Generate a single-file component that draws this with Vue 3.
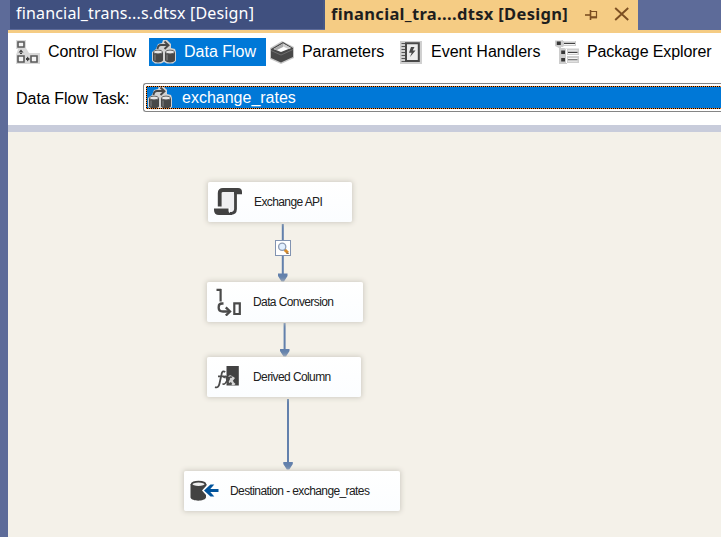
<script setup>
const nodes = [
  { id: 'script', label: 'Exchange API' },
  { id: 'convert', label: 'Data Conversion' },
  { id: 'derive', label: 'Derived Column' },
  { id: 'dest', label: 'Destination - exchange_rates' },
]
</script>

<template>
  <div class="window">
    <svg class="defs" width="0" height="0">
      <symbol id="flow-icon" viewBox="0 0 24 24">
        <path d="M0 12 L4 9 L6 4 L10 3 L11 0 H15 L19 4 V8 L23 9 L24 12 V21 L21 23.5 H15 L12 22 L9 23.5 H3 L0 21 Z" fill="#d2d2d2" />
        <path d="M5.5 9 Q6 5 9 5 H16 M12.5 1.5 L16.5 5.2 L12.5 9" fill="none" stroke="#484848" stroke-width="1.9" />
        <path d="M1 12 V20.5 C2.5 23 9.5 23 11 20.5 V12 Z M13 12 V20.5 C14.5 23 21.5 23 23 20.5 V12 Z" fill="#484848" />
        <path d="M3 14.5 V20.5 M15 14.5 V20.5" stroke="#858585" />
        <ellipse cx="6" cy="12" rx="4.5" ry="1.9" fill="#e6e6e6" stroke="#555" stroke-width=".9" />
        <ellipse cx="18" cy="12" rx="4.5" ry="1.9" fill="#e6e6e6" stroke="#555" stroke-width=".9" />
      </symbol>
    </svg>

    <header class="tabs">
      <div class="tab idle"><span class="idle-text">financial_trans...s.dtsx [Design]</span></div>
      <div class="tab current">
        <span class="current-text">financial_tra....dtsx [Design]</span>
        <svg class="pin" width="14" height="12" viewBox="0 0 14 12" fill="none" stroke="#7c4f22">
          <path d="M0 6 H5" stroke-width="1.6" /><path d="M5.5 1 V11" stroke-width="1.6" /><path d="M5.5 2.5 H11.5 V9" stroke-width="1.2" /><path d="M5.5 8.3 H12" stroke-width="2.2" />
        </svg>
        <svg class="close" width="16" height="14" viewBox="0 0 16 14" fill="none" stroke="#7c4f22" stroke-width="1.9">
          <path d="M1.2 1 L14.2 13 M14.2 1 L1.2 13" />
        </svg>
      </div>
    </header>

    <main class="pane">
      <nav class="views">
        <div class="view control">
          <svg width="24" height="24" viewBox="0 0 24 24">
            <path d="M0 0 H10 V8 L13 13 H24 V24 H0 V15 L2 9 H0 Z" fill="#d9d9d9" />
            <g fill="#f4f4f4" stroke="#5a5a5a" stroke-width="1.6"><path d="M2 2 H8 V7 H2 Z M2 16 H8 V22 H2 Z M15 16 H21 V22 H15 Z" /></g>
            <path d="M5 9.5 L2.5 12.5 H7.5 Z M4 12 H6 V14 H4 Z M10 18 H13 V20 H10 Z M11 16.5 L14 19 L11 21.5 Z" fill="#424242" />
          </svg>
          <span>Control Flow</span>
        </div>
        <div class="view data selected">
          <svg width="24" height="24"><use href="#flow-icon" /></svg>
          <span>Data Flow</span>
        </div>
        <div class="view params">
          <svg width="24" height="24" viewBox="0 0 24 24">
            <path d="M0 8 L12 1 L24 7 V18 L11 24 L0 19 Z" fill="#c8c8c8" />
            <path d="M1 9 L13 2 L23 8 V17 L11 22.5 L1 18 Z" fill="#484848" />
            <path d="M3.5 9 L13 3.5 L21 8 L11 12 Z" fill="#fff" /><path d="M3.5 9 L13 3.5 V7 L6.5 10.2 Z" fill="#aaa" /><path d="M13 3.5 L21 8 L18.5 9 L13 6.5 Z" fill="#ccc" />
            <path d="M1 10.5 L11 15 L23 9.5" fill="none" stroke="#777" stroke-width=".8" />
          </svg>
          <span>Parameters</span>
        </div>
        <div class="view events">
          <svg width="22" height="23" viewBox="0 0 22 23">
            <path d="M0 0 H22 V23 H0 Z" fill="#d0d0d0" />
            <path d="M6 2.2 H18.8 V20 H6 Z" fill="#ededed" stroke="#484848" stroke-width="2" />
            <path d="M1.5 2.5 H5 M1.5 5.5 H5 M1.5 8.5 H5 M1.5 11.5 H5 M1.5 14.5 H5 M1.5 17.5 H5 M1.5 20.5 H5" stroke="#555" stroke-width="1.2" />
            <path d="M11 6 L9 11.8 H11.7 L10 16 L15.5 9.6 H12.7 L14.5 6 Z" fill="#484848" />
          </svg>
          <span>Event Handlers</span>
        </div>
        <div class="view explorer">
          <svg width="24" height="24" viewBox="0 0 24 24">
            <path d="M0 .5 H6 L8 0 V1 H21 V6 H8 L10 8.5 H24 V15 H12 V16 H24 V23 H12 V24 H4 V8 L0 6 Z" fill="#cdcdcd" />
            <path d="M11.5 9 V23 M6 7.5 H21" stroke="#fff" />
            <path d="M1.8 1.5 H5.8 V5 H1.8 Z M6.2 10.5 H10 V14 H6.2 Z M6.2 18 H10 V21.5 H6.2 Z" fill="#383838" />
            <path d="M9 3.3 H20 M13 12.3 H22.5 M13 19.7 H22.5" stroke="#f5f5f5" stroke-width="3.4" />
            <path d="M9 3.3 H20 M13 12.3 H22.5" stroke="#424242" stroke-width="1.3" />
            <path d="M13 19.7 H22.5" stroke="#777" stroke-width="1.3" />
          </svg>
          <span>Package Explorer</span>
        </div>
      </nav>

      <div class="task">
        <span class="task-label">Data Flow Task:</span>
        <div class="combo">
          <div class="combo-value">
            <svg class="combo-icon" width="24" height="24"><use href="#flow-icon" /></svg>
            <span>exchange_rates</span>
            <div class="focus"></div>
          </div>
        </div>
      </div>

      <section class="canvas">
        <svg class="links" width="713" height="405" viewBox="8 132 713 405">
          <g stroke="#6280ac" stroke-width="2"><path d="M282.8 224 V275 M284.6 323 V351 M288 399 V464" /></g>
          <path d="M278 273.5 H287.5 V276 L284 281.5 H281.5 L278 276 Z M280 349 H289.5 V351 L286 356.5 H283.5 L280 351 Z M283.3 462 H292.8 V464 L289.3 469.5 H286.8 L283.3 464 Z" fill="#6280ac" />
        </svg>
        <div class="viewer">
          <svg width="14" height="14" viewBox="0 0 14 14">
            <path d="M8.5 8.5 L11.8 11.8" stroke="#d78b2a" stroke-width="3" /><path d="M10.5 12.3 L12.8 12.3" stroke="#765334" />
            <circle cx="6.2" cy="5.8" r="3.6" fill="#e1efff" stroke="#8f9db5" stroke-width="1.3" />
          </svg>
        </div>

        <div v-for="n in nodes" :key="n.id" class="node" :class="n.id">
          <svg v-if="n.id === 'script'" class="glyph" width="30" height="30" viewBox="0 0 30 30">
            <path d="M8 3 H24 L21 8 V25 L17 27 V21 H7 V7 Z" fill="#efeff1" />
            <path d="M6.7 19.5 V6 Q6.7 3 10 3 H24" fill="none" stroke="#424242" stroke-width="3.8" />
            <path d="M22.5 5 V22 Q22.5 26.5 17 26.5" fill="none" stroke="#424242" stroke-width="2.8" />
            <path d="M21 1.1 H25 Q29 1.1 29 5 V7.3 H21 Z M1 21.5 H15.5 V24 Q15.5 26 17.5 26 L19 25.5 V28 H6 Q1 28 1 23 Z" fill="#424242" />
          </svg>
          <svg v-else-if="n.id === 'convert'" class="glyph" width="26" height="28" viewBox="0 0 26 28" fill="none" stroke="#4a4a4a">
            <path d="M.5 1.8 H5.2 M4.6 1 V13.5" stroke-width="2.2" />
            <path d="M7.5 15.5 H6 Q2.7 15.5 2.7 19 V20 Q2.7 23.5 7 23.5 H13" stroke-width="2.3" />
            <path d="M9.8 19.3 L14 23.5 L9.8 27.5" stroke-width="2.4" />
            <path d="M18.3 15.3 H23.8 V26 H18.3 Z" stroke-width="2.2" />
          </svg>
          <svg v-else-if="n.id === 'derive'" class="glyph" width="27" height="25" viewBox="0 0 27 25">
            <path d="M13.5 1 H25.8 V20.5 H13.5 Z" fill="#424242" />
            <path d="M16.3 12.4 Q18 10.8 18.2 14 L18.9 17 Q19.5 20 21.5 18 M20.8 12.2 L15.5 19" fill="none" stroke="#d5d5d5" stroke-width="3" />
            <path d="M12.2 7 Q9.3 4.8 8.5 9.5 L6.5 18.5 Q5.5 23.5 2 22.2 M5 11.4 H11.5" fill="none" stroke="#4a4a4a" stroke-width="1.8" />
            <path d="M10.5 12.7 Q13 10 13.8 13.5 L14.7 17 Q15.4 20.6 18.5 17.8" fill="none" stroke="#4a4a4a" stroke-width="2.1" />
            <path d="M19 12.4 Q17.5 11 15.8 13.4 L12.8 17.5 Q11.4 20 9.5 18.7" fill="none" stroke="#4a4a4a" stroke-width="1.5" />
          </svg>
          <svg v-else class="glyph" width="30" height="22" viewBox="0 0 30 22">
            <path d="M0.5 4 V17.5 C2 21.7 14.5 21.7 16 17.5 V15 L12 10.5 L16.5 5.5 V4 Z" fill="#424242" />
            <ellipse cx="8.5" cy="4.3" rx="6.9" ry="2.7" fill="#eee" stroke="#424242" stroke-width="1.8" />
            <path d="M14 10.5 L20.5 4.5 H24.3 L20.3 9.1 H28.5 V12 H20.3 L24.3 16.6 H20.5 Z" fill="#00539c" />
          </svg>
          <span class="label">{{ n.label }}</span>
        </div>
      </section>
    </main>
  </div>
</template>

<style>
body { margin: 0; overflow: hidden; }
</style>

<style scoped>
.window { width: 721px; height: 537px; overflow: hidden; background: #5d6b99; display: flex; flex-direction: column; font-family: "Liberation Sans", Arial, sans-serif; white-space: nowrap; }
.window * { box-sizing: border-box; }
svg { display: block; flex: none; }
.defs { position: absolute; }
.tabs { height: 33px; flex: none; margin-left: 8px; padding-left: 2px; display: flex; background: linear-gradient(#5d6b99 30px, #f5cc84 30px); font-family: "Noto Sans", sans-serif; }
.tab { display: flex; }
.idle { width: 315px; height: 29px; padding-left: 6px; background: #40507f; border-right: 2px solid #465785; color: #fff; }
.idle-text { font-size: 16px; line-height: 27px; letter-spacing: .17px; }
.current { width: 313px; height: 33px; padding-left: 6px; background: #f5cc84; color: #1e1e1e; }
.current-text { width: 254px; font-size: 16.5px; font-weight: 700; line-height: 28px; letter-spacing: .33px; }
.pin { margin-top: 9px; }
.close { margin: 7px 0 0 15px; }
.pane { width: 713px; height: 504px; margin-left: 8px; background: #fff; }
.views { height: 50px; padding-top: 5px; display: flex; font-size: 16px; }
.view { height: 28px; display: flex; align-items: center; color: #000; }
.view span { line-height: 28px; }
.control { width: 141px; padding-left: 8px; gap: 8px; letter-spacing: -.14px; }
.data { width: 117px; padding-left: 3px; gap: 8px; }
.selected { background: #0078d7; color: #fff; }
.params { width: 134px; padding-left: 4px; gap: 8px; letter-spacing: -.05px; }
.events { width: 155px; gap: 9px; }
.explorer { gap: 8px; letter-spacing: -.12px; }
.task { height: 42px; padding-left: 8px; display: flex; font-size: 16px; }
.task-label { width: 127px; line-height: 31px; }
.combo { width: 578px; height: 29px; padding: 2px 0 0 2px; border: 1px solid #858585; border-right: 0; border-radius: 3px 0 0 3px; }
.combo-value { position: relative; height: 23px; padding-left: 2px; display: flex; gap: 10px; align-items: center; background: #0078d7; color: #fff; }
.focus {
  position: absolute; inset: 0;
  background:
    repeating-linear-gradient(90deg, #ff8728 0 1px, #000 1px 2px) top / 100% 1px no-repeat,
    repeating-linear-gradient(90deg, #ff8728 0 1px, #000 1px 2px) bottom / 100% 1px no-repeat,
    repeating-linear-gradient(#ff8728 0 1px, #000 1px 2px) left / 1px 100% no-repeat;
}
.canvas { position: relative; height: 412px; border-top: 7px solid #c8ccdb; background: #f4f1e9; }
.links { position: absolute; left: 0; top: 0; }
.viewer { position: absolute; left: 267px; top: 108px; width: 16px; height: 16px; border: 1px solid #8193b1; background: #fff; }
.node { position: absolute; height: 40px; display: flex; align-items: center; background: linear-gradient(#fff, #fbfdff); border-radius: 2px; box-shadow: 0 0 5px 1px #cfccc3; color: #202020; font-size: 12px; }
.label { letter-spacing: -.6px; }
.script { left: 200px; top: 50px; width: 144px; padding-left: 5px; }
.convert { left: 199px; top: 150px; width: 156px; padding-left: 9px; }
.derive { left: 199px; top: 225px; width: 154px; padding-left: 6px; }
.dest { left: 176px; top: 339px; width: 216px; padding-left: 6px; }
.script .label { margin-left: 11px; }
.convert .label { margin: -1px 0 0 11px; }
.derive .label { margin-left: 13px; }
.dest .label { margin: -1px 0 0 10px; }
.convert .glyph { margin-top: -1px; }
</style>
